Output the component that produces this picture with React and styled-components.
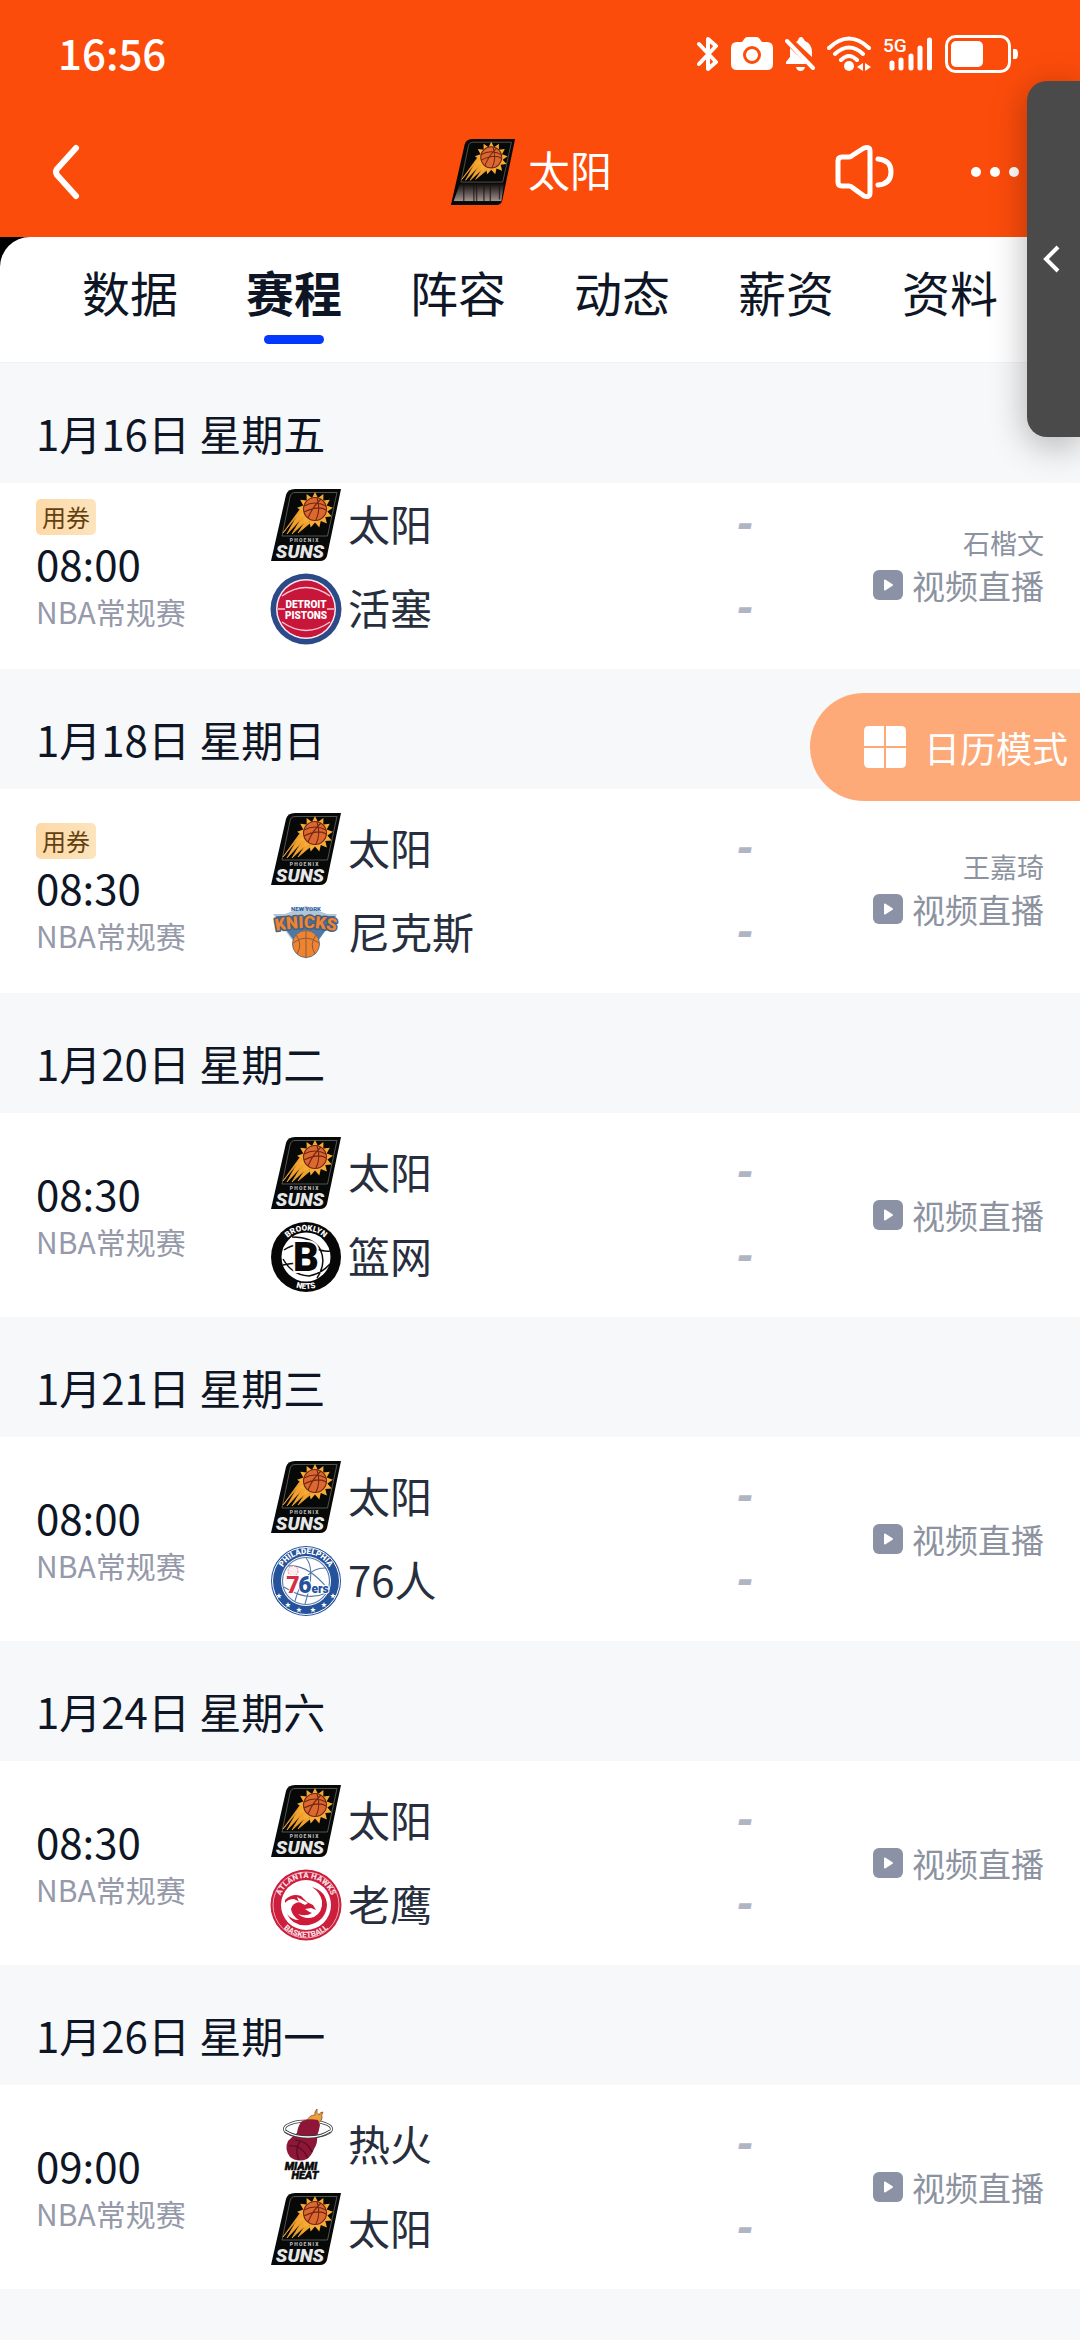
import React from "react";
import styled, { createGlobalStyle } from "styled-components";

const schedule = [
  {
    date: "1月16日 星期五",
    time: "08:00",
    coupon: true,
    host: "石楷文",
    teams: ["suns", "pistons"],
    scrolled: true,
  },
  {
    date: "1月18日 星期日",
    time: "08:30",
    coupon: true,
    host: "王嘉琦",
    teams: ["suns", "knicks"],
  },
  { date: "1月20日 星期二", time: "08:30", teams: ["suns", "nets"] },
  { date: "1月21日 星期三", time: "08:00", teams: ["suns", "sixers"] },
  { date: "1月24日 星期六", time: "08:30", teams: ["suns", "hawks"] },
  { date: "1月26日 星期一", time: "09:00", teams: ["heat", "suns"] },
];

const tabs = ["数据", "赛程", "阵容", "动态", "薪资", "资料"];

// LOGOS
const burst = (cx, cy, outer, inner, count) => {
  const pts = [];
  for (let i = 0; i < count * 2; i++) {
    const r = i % 2 ? inner : outer;
    const a = (Math.PI * i) / count - Math.PI / 2;
    pts.push(
      `${(cx + r * Math.cos(a)).toFixed(1)},${(cy + r * Math.sin(a)).toFixed(1)}`
    );
  }
  return pts.join(" ");
};

const SunsLogo = ({ blurredName }) => (
  <Logo viewBox="0 0 72 72" aria-hidden="true">
    <defs>
      <linearGradient id="smear" x1="0" y1="0" x2="0" y2="1">
        <stop offset="0" stopColor="#0b0707" />
        <stop offset="1" stopColor="#a39592" />
      </linearGradient>
    </defs>
    <path
      d="M25 0H71L57 67Q55.500 72 50 72H1L16 6Q17.500 0 25 0Z"
      fill="#070808"
    />
    <path
      d="M25 3.500H67L57.500 47H12L20 8Q21 3.500 25 3.500Z"
      fill="none"
      stroke="#55534c"
      strokeWidth="1"
    />
    <path
      d="M31 19L13 44L27 27L17 45L31 30L22 45L35 33L28 44L40 34Z"
      fill="#f2a22e"
      stroke="#f2a22e"
      strokeWidth="0.800"
    />
    <polygon points={burst(45, 21, 18, 12.5, 13)} fill="#f6ab36" />
    <circle cx="45" cy="20" r="11.500" fill="#dc6830" />
    <g fill="none" stroke="#6d2613" strokeWidth="1.100">
      <circle cx="45" cy="20" r="11.500" />
      <path d="M34 17Q45 11 56 17M34 23Q49 16 56 21M38 29Q43 17 51 10M46 31Q51 21 47 9" />
    </g>
    {blurredName ? (
      <>
        <path d="M11 48H59L56 68H4Z" fill="url(#smear)" />
        <path
          d="M15 50V68M26 50V68M29 50V68M37 50V68M44 50V68M54 50V66"
          stroke="#1c1212"
          strokeWidth="1.500"
          opacity="0.700"
        />
        <path d="M3 68H56L54 71L50 72H1Z" fill="#070808" />
      </>
    ) : (
      <>
        <LogoText x="34" y="53" $size={5} fill="#b9babd">
          P H O E N I X
        </LogoText>
        <LogoText
          x="30"
          y="69"
          $size={19}
          fill="#e6e7e9"
          fontStyle="italic"
        >
          SUNS
        </LogoText>
      </>
    )}
  </Logo>
);

const PistonsLogo = () => (
  <Logo viewBox="0 0 72 72" aria-hidden="true">
    <circle cx="36" cy="36" r="35.500" fill="#2b4a87" />
    <circle cx="36" cy="36" r="30" fill="#f7e9ef" />
    <circle cx="36" cy="36" r="28.500" fill="#c8153a" />
    <g fill="none" stroke="#f5c9d5" strokeWidth="1.400">
      <path d="M8 36H64" />
      <path d="M12 23Q36 6 60 23M12 49Q36 66 60 49" />
    </g>
    <rect x="15" y="26" width="42" height="21" fill="#c8153a" />
    <LogoText x="36" y="35" $size={10} fill="#fff">
      DETROIT
    </LogoText>
    <LogoText x="36" y="46" $size={10} fill="#fff">
      PISTONS
    </LogoText>
  </Logo>
);

const KnicksLogo = () => (
  <Logo viewBox="0 0 72 72" aria-hidden="true">
    <defs>
      <path id="knicksArc" d="M2 35Q36 27 70 35" />
    </defs>
    <path d="M3 17H15L36 9L57 17H67L36 62Z" fill="#b4c6d4" />
    <path d="M6 19H66L36 60Z" fill="#4d79a6" />
    <LogoText x="36" y="14" $size={6} fill="#2e67a5">
      NEW YORK
    </LogoText>
    <circle
      cx="36"
      cy="47"
      r="13.500"
      fill="#ef8430"
      stroke="#6d6f79"
      strokeWidth="1"
    />
    <path
      d="M36 34V61M26 38Q33 47 27 57M46 38Q39 47 45 57M23 46Q36 36 49 46"
      fill="none"
      stroke="#8b5a42"
      strokeWidth="1"
    />
    <LogoText
      $size={17}
      fill="#ef8430"
      stroke="#465f80"
      strokeWidth="3"
      strokeLinejoin="round"
      paintOrder="stroke"
    >
      <textPath href="#knicksArc" startOffset="50%">
        KNICKS
      </textPath>
    </LogoText>
  </Logo>
);

const NetsLogo = () => (
  <Logo viewBox="0 0 72 72" aria-hidden="true">
    <defs>
      <path id="netsTop" d="M9.500 36A26.500 26.500 0 0 1 62.500 36" />
      <path id="netsBottom" d="M4 36A32 32 0 0 0 68 36" />
    </defs>
    <circle cx="36" cy="36" r="35" fill="#070707" />
    <circle cx="36" cy="36" r="24.500" fill="#fff" />
    <g fill="none" stroke="#0c0c0c" strokeWidth="1.500">
      <path d="M14 29Q26 20 44 27Q54 31 60 30M13 44Q30 40 36 45M22 16Q43 16 50 28Q57 42 47 57M13 38Q22 54 39 55Q51 53 60 43" />
    </g>
    <LogoText
      x="36"
      y="50"
      $size={40}
      $narrow
      fill="#090909"
      stroke="#fff"
      strokeWidth="4"
      paintOrder="stroke"
    >
      B
    </LogoText>
    <LogoText $size={8} fill="#fff">
      <textPath href="#netsTop" startOffset="50%">
        BROOKLYN
      </textPath>
    </LogoText>
    <LogoText $size={8} fill="#fff">
      <textPath href="#netsBottom" startOffset="50%">
        NETS
      </textPath>
    </LogoText>
  </Logo>
);

const SixersLogo = () => (
  <Logo viewBox="0 0 72 72" aria-hidden="true">
    <defs>
      <path id="sixersTop" d="M12.200 47A26.500 26.500 0 1 1 59.800 47" />
    </defs>
    <circle cx="36" cy="36" r="35" fill="#24529b" />
    <circle cx="36" cy="36" r="33.500" fill="none" stroke="#fff" />
    <circle cx="36" cy="36" r="25" fill="#fff" />
    <g fill="none" stroke="#5878a8" strokeWidth="1.100">
      <circle cx="36" cy="36" r="23.500" />
      <path d="M18 21Q38 19 58 44M36 13Q46 24 35 59M56 23Q34 22 25 56M14 42Q37 57 56 48" />
    </g>
    <LogoText $size={8} fill="#fff">
      <textPath href="#sixersTop" startOffset="50%">
        PHILADELPHIA
      </textPath>
    </LogoText>
    {[
      [9, 51],
      [18, 60],
      [29, 65],
      [43, 65],
      [54, 60],
      [63, 51],
    ].map(([x, y]) => (
      <polygon key={x} points={burst(x, y, 3, 1.3, 5)} fill="#fff" />
    ))}
    <g
      fill="none"
      stroke="#e58a98"
      strokeWidth="1"
      transform="translate(23 26)"
    >
      <circle r="5" fill="#fbeff1" strokeDasharray="2 1" />
    </g>
    <LogoText
      x="23"
      y="48"
      $size={23}
      fill="#d52e46"
      stroke="#fff"
      strokeWidth="2"
      paintOrder="stroke"
    >
      7
    </LogoText>
    <LogoText
      x="35"
      y="48"
      $size={23}
      fill="#24529b"
      stroke="#fff"
      strokeWidth="2"
      paintOrder="stroke"
    >
      6
    </LogoText>
    <LogoText
      x="50"
      y="48"
      $size={12}
      fill="#24529b"
      stroke="#fff"
      strokeWidth="2"
      paintOrder="stroke"
    >
      ers
    </LogoText>
  </Logo>
);

const HawksLogo = () => (
  <Logo viewBox="0 0 72 72" aria-hidden="true">
    <defs>
      <path id="hawksTop" d="M9 36A27 27 0 0 1 63 36" />
      <path id="hawksBottom" d="M3.500 36A32.500 32.500 0 0 0 68.500 36" />
    </defs>
    <circle cx="36" cy="36" r="35.500" fill="#cb1f3d" />
    <circle cx="36" cy="36" r="33" fill="none" stroke="#eda9b5" />
    <circle cx="36" cy="36" r="25" fill="#fff" />
    <path
      d="M15 31Q22 24 31 27L37 33L43 36L46 41L41 39L35 40Q39 43 42 44Q36 48 28 45Q35 51 44 48Q53 43 52 32Q50 23 42 18Q56 22 57 36Q56 52 39 56Q23 58 17 45Q22 51 29 51Q22 47 21 40Q22 34 30 33L24 30Q18 30 15 34Z"
      fill="#d01a3a"
    />
    <path d="M27 28L38 34L35 36L29 33Z" fill="#fff" />
    <LogoText $size={8} fill="#f9dbe0">
      <textPath href="#hawksTop" startOffset="50%">
        ATLANTA HAWKS
      </textPath>
    </LogoText>
    <LogoText $size={8} fill="#f9dbe0">
      <textPath href="#hawksBottom" startOffset="50%">
        BASKETBALL
      </textPath>
    </LogoText>
  </Logo>
);

const HeatLogo = () => (
  <Logo viewBox="0 0 72 72" aria-hidden="true">
    <ellipse
      cx="38"
      cy="20"
      rx="23.500"
      ry="8"
      fill="none"
      stroke="#3b3b40"
      strokeWidth="3"
    />
    <ellipse
      cx="38"
      cy="20"
      rx="23.500"
      ry="8"
      fill="none"
      stroke="#fff"
      strokeWidth="1.500"
    />
    <path
      d="M37 12Q39 6 45 6Q44 3 47 0Q46 4 49 6Q50 3 53 3Q51 6 52 9Q52 12 48 14Z"
      fill="#e9a13c"
      stroke="#8d4a21"
      strokeWidth="0.800"
    />
    <path
      d="M31 13Q36 9 48 11L50 16Q49 22 47 27Q48 34 44 40Q42 46 37 50Q28 54 20 48Q14 40 18 32Q23 27 27 24Q28 17 31 13Z"
      fill="#8e1737"
    />
    <path
      d="M19 37Q31 35 38 49M25 31Q38 32 42 43M29 51Q24 42 30 32"
      fill="none"
      stroke="#4f0d22"
      strokeWidth="1.200"
    />
    <path
      d="M15 22Q24 28 38 28Q52 28 60 22"
      fill="none"
      stroke="#3b3b40"
      strokeWidth="3"
    />
    <path
      d="M15 22Q24 28 38 28Q52 28 60 22"
      fill="none"
      stroke="#fff"
      strokeWidth="1.500"
    />
    <LogoText
      x="31"
      y="61"
      $size={11}
      fill="#0a0a0a"
      stroke="#0a0a0a"
      strokeWidth="0.500"
      fontStyle="italic"
    >
      MIAMI
    </LogoText>
    <LogoText
      x="35"
      y="70"
      $size={11}
      fill="#0a0a0a"
      stroke="#0a0a0a"
      strokeWidth="0.500"
      fontStyle="italic"
    >
      HEAT
    </LogoText>
  </Logo>
);

const teamInfo = {
  suns: { name: "太阳", Icon: SunsLogo },
  pistons: { name: "活塞", Icon: PistonsLogo },
  knicks: { name: "尼克斯", Icon: KnicksLogo },
  nets: { name: "篮网", Icon: NetsLogo },
  sixers: { name: "76人", Icon: SixersLogo },
  hawks: { name: "老鹰", Icon: HawksLogo },
  heat: { name: "热火", Icon: HeatLogo },
};

// STATUS BAR
const StatusIcons = () => (
  <IconRow>
    <svg width="22" height="36" viewBox="0 0 22 36" aria-label="Bluetooth">
      <path
        d="M2 8L19 26L11 33V3L19 10L2 28"
        fill="none"
        stroke="#fff"
        strokeWidth="4"
        strokeLinecap="round"
        strokeLinejoin="round"
      />
    </svg>
    <svg width="42" height="36" viewBox="0 0 42 36" aria-label="Camera">
      <path
        d="M6 6H11L14 2Q15 1 17 1H25Q27 1 28 2L31 6H36Q42 6 42 12V28Q42 34 36 34H6Q0 34 0 28V12Q0 6 6 6Z"
        fill="#fff"
      />
      <circle
        cx="21"
        cy="19"
        r="7.500"
        fill="none"
        stroke="#fb4d0b"
        strokeWidth="3"
      />
    </svg>
    <svg width="30" height="36" viewBox="0 0 30 36" aria-label="Muted">
      <path
        d="M11 6Q13 5 14 2Q16 0 18 2L20 5Q27 8 27 16V21L11 6ZM5 12L22 28H1V26L5 21ZM11 31H20Q19 35 15.500 35Q12 35 11 31Z"
        fill="#fff"
      />
      <path d="M2 5L28 32" stroke="#fff" strokeWidth="4" strokeLinecap="round" />
    </svg>
    <svg width="44" height="36" viewBox="0 0 44 36" aria-label="Wi-Fi">
      <g fill="none" stroke="#fff" strokeWidth="4" strokeLinecap="round">
        <path d="M2 12Q22 -7 42 12M8 18Q22 5 36 18M14 24Q22 16 30 24" />
      </g>
      <circle cx="22" cy="30" r="5" fill="#fff" />
      <path d="M36 27V35L30 31ZM38 27V35L44 31Z" fill="#fff" />
    </svg>
    <svg width="50" height="36" viewBox="0 0 50 36" aria-label="5G">
      <text
        x="0"
        y="16"
        fill="#fff"
        fontFamily="Roboto, sans-serif"
        fontSize="19"
        fontWeight="500"
      >
        5G
      </text>
      <path
        d="M9 27V32M18 24V32M28 20V32M37 12V32M46.500 4V32"
        stroke="#fff"
        strokeWidth="5"
        strokeLinecap="round"
      />
    </svg>
    <svg width="74" height="38" viewBox="0 0 74 38" aria-label="Battery">
      <rect
        x="1.500"
        y="1.500"
        width="63"
        height="35"
        rx="9"
        fill="none"
        stroke="#fff"
        strokeWidth="3"
      />
      <rect x="6" y="6" width="32" height="26" rx="5" fill="#fff" />
      <path d="M68 14H71Q73 15 73 19Q73 23 71 24H68Z" fill="#fff" />
    </svg>
  </IconRow>
);

const TeamRow = ({ id }) => {
  const { name, Icon } = teamInfo[id];
  return (
    <Team>
      <Icon />
      <span>{name}</span>
      <Score>-</Score>
    </Team>
  );
};

const Game = ({ game }) => (
  <section>
    <DateTitle>{game.date}</DateTitle>
    <Match $scrolled={game.scrolled}>
      <Info>
        {game.coupon && <Coupon>用券</Coupon>}
        <time>{game.time}</time>
        <small>NBA常规赛</small>
      </Info>
      <Teams>
        {game.teams.map((id) => (
          <TeamRow key={id} id={id} />
        ))}
      </Teams>
      <Live>
        {game.host && <Host>{game.host}</Host>}
        <LiveLink href="#live">
          <svg width="30" height="30" viewBox="0 0 30 30" aria-hidden="true">
            <rect width="30" height="30" rx="6" fill="#8c92a6" />
            <path
              d="M12 10.500L19 15L12 19.500Z"
              fill="#fff"
              stroke="#fff"
              strokeWidth="2"
              strokeLinejoin="round"
            />
          </svg>
          视频直播
        </LiveLink>
      </Live>
    </Match>
  </section>
);

const App = () => {
  return (
    <Page>
      <GlobalStyle />
      <Top>
        <StatusBar>
          <Clock>16:56</Clock>
          <StatusIcons />
        </StatusBar>
        <TitleBar>
          <Side>
            <IconButton aria-label="返回">
              <svg width="32" height="60" viewBox="0 0 32 60">
                <path
                  d="M26 6L7 27Q5 30 7 33L26 54"
                  fill="none"
                  stroke="#fff"
                  strokeWidth="6"
                  strokeLinecap="round"
                />
              </svg>
            </IconButton>
          </Side>
          <Title>
            <SunsLogo blurredName />
            <h1>太阳</h1>
          </Title>
          <Side $end>
            <IconButton aria-label="播报">
              <svg width="60" height="56" viewBox="0 0 60 56">
                <g
                  fill="none"
                  stroke="#fff"
                  strokeWidth="5"
                  strokeLinecap="round"
                  strokeLinejoin="round"
                >
                  <path d="M8 13H15Q17 13 19 11L30 4Q36 2 36 7V49Q36 54 30 52L19 44Q17 42 15 42H8Q4 42 4 38V17Q4 13 8 13Z" />
                  <path d="M44 15Q57 16 57 28Q57 40 44 41" />
                </g>
              </svg>
            </IconButton>
            <IconButton aria-label="更多">
              <svg width="50" height="12" viewBox="0 0 50 12" fill="#fff">
                <circle cx="6" cy="6" r="5" />
                <circle cx="25" cy="6" r="5" />
                <circle cx="44" cy="6" r="5" />
              </svg>
            </IconButton>
          </Side>
        </TitleBar>
      </Top>

      <TabsBack>
        <Tabs>
          {tabs.map((tab) => (
            <Tab key={tab} $active={tab === "赛程"}>
              {tab}
            </Tab>
          ))}
        </Tabs>
      </TabsBack>

      <main>
        {schedule.map((game) => (
          <Game key={game.date} game={game} />
        ))}
      </main>

      <CalendarButton>
        <svg width="42" height="42" viewBox="0 0 42 42" fill="#fff">
          <path d="M5 0H20V20H0V5Q0 0 5 0ZM22 0H37Q42 0 42 5V20H22ZM0 22H20V42H5Q0 42 0 37ZM22 22H42V37Q42 42 37 42H22Z" />
        </svg>
        日历模式
      </CalendarButton>
      <EdgePanel aria-label="展开">
        <svg width="20" height="32" viewBox="0 0 20 32">
          <path
            d="M16 4L4 16L16 28"
            fill="none"
            stroke="#fff"
            strokeWidth="4"
          />
        </svg>
      </EdgePanel>
    </Page>
  );
};

const GlobalStyle = createGlobalStyle`
  * {
    box-sizing: border-box;
  }
  body {
    margin: 0;
    background: #f7f8fa;
    font-family: "Noto Sans CJK SC", sans-serif;
  }
  button {
    border: none;
    padding: 0;
    background: none;
    font-family: inherit;
  }
  svg {
    display: block;
    flex-shrink: 0;
  }
`;

const Page = styled.div`
  position: relative;
  min-height: 100vh;
  overflow: hidden;
  background: #f7f8fa;
  color: #0e1626;
`;

const Top = styled.header`
  background: #fc4c0b;
  color: #fff;
`;

const StatusBar = styled.div`
  display: flex;
  align-items: center;
  justify-content: space-between;
  height: 108px;
  padding: 0 61px 0 58px;
`;

const Clock = styled.time`
  padding-bottom: 6px;
  font-size: 42px;
  font-weight: 500;
`;

const IconRow = styled.div`
  display: flex;
  align-items: center;
  gap: 12px;
`;

const TitleBar = styled.div`
  display: flex;
  align-items: center;
  height: 129px;
  padding: 0 60px 2px 50px;
`;

const Side = styled.div`
  display: flex;
  flex: 1;
  align-items: center;
  justify-content: ${(props) => (props.$end ? "flex-end" : "flex-start")};
  gap: 76px;
`;

const IconButton = styled.button`
  color: #fff;
`;

const Logo = styled.svg`
  width: 72px;
  height: 72px;
  overflow: visible;
`;

const LogoText = styled.text`
  font-family: ${(props) => (props.$narrow ? '"Liberation Sans Narrow", ' : "")}Roboto, sans-serif;
  font-size: ${(props) => props.$size}px;
  font-weight: 900;
  text-anchor: middle;
`;

const Title = styled.div`
  display: flex;
  align-items: center;
  gap: 12px;
  padding-right: 8px;

  ${Logo} {
    width: 66px;
    height: 66px;
  }
  h1 {
    margin: 0;
    padding-bottom: 6px;
    font-size: 42px;
    font-weight: 400;
    line-height: 60px;
  }
`;

const TabsBack = styled.div`
  background: linear-gradient(to right, #000 50%, #fc4c0b 50%);
`;

const Tabs = styled.nav`
  display: flex;
  justify-content: center;
  gap: 68px;
  height: 126px;
  border-bottom: 1px solid #f0f1f3;
  border-radius: 30px 30px 0 0;
  background: #fff;
`;

const Tab = styled.button`
  display: flex;
  flex-direction: column;
  align-items: center;
  padding-top: 19px;
  color: #0e1626;
  font-size: 48px;
  font-weight: ${(props) => (props.$active ? 700 : 400)};
  line-height: 70px;

  &::after {
    content: "";
    width: 60px;
    height: 9px;
    margin-top: 9px;
    border-radius: 5px;
    background: ${(props) => (props.$active ? "#0339fd" : "transparent")};
  }
`;

const DateTitle = styled.h2`
  margin: 0;
  padding: 22px 36px 2px;
  font-size: 42px;
  font-weight: 400;
  line-height: 96px;
`;

const Match = styled.article`
  display: grid;
  grid-template-columns: 234px 1fr 291px;
  padding: ${(props) => (props.$scrolled ? 6 : 24)}px 36px 24px;
  background: #fff;
`;

const Info = styled.div`
  display: flex;
  flex-direction: column;
  align-items: flex-start;
  justify-content: center;
  padding-bottom: 4px;

  time {
    font-size: 42px;
    line-height: 56px;
  }
  small {
    color: #9599a9;
    font-size: 30px;
    line-height: 40px;
  }
`;

const Coupon = styled.span`
  padding: 0 6px;
  border-radius: 5px;
  background: linear-gradient(to right, #fdd9a8, #fce4bd);
  color: #64400f;
  font-size: 24px;
  line-height: 36px;
`;

const Teams = styled.div`
  display: grid;
  gap: 12px;
`;

const Team = styled.div`
  display: flex;
  align-items: center;
  gap: 6px;
  height: 72px;
  color: #272e3d;
  font-size: 42px;
  line-height: 60px;

  span {
    padding-bottom: 4px;
  }
`;

const Score = styled.b`
  margin-left: auto;
  padding-bottom: 4px;
  color: #b0b5c4;
  font-family: "Liberation Sans", sans-serif;
  font-size: 48px;
  font-style: italic;
  line-height: 60px;
`;

const Live = styled.div`
  display: flex;
  flex-direction: column;
  align-items: flex-end;
  justify-content: center;
  color: #8c92a0;
`;

const Host = styled.span`
  font-size: 27px;
  line-height: 36px;
`;

const LiveLink = styled.a`
  display: flex;
  align-items: center;
  gap: 9px;
  color: inherit;
  font-size: 33px;
  line-height: 48px;
  text-decoration: none;
`;

const CalendarButton = styled.button`
  position: absolute;
  top: 693px;
  right: 0;
  display: flex;
  align-items: center;
  gap: 18px;
  height: 108px;
  padding: 0 12px 0 54px;
  border-radius: 54px 0 0 54px;
  background: #feaa78;
  color: #fff;
  font-size: 36px;
`;

const EdgePanel = styled.button`
  position: absolute;
  top: 81px;
  right: 0;
  display: flex;
  align-items: center;
  width: 53px;
  height: 356px;
  padding-left: 15px;
  border-radius: 20px 0 0 20px;
  background: #4a4a4a;
  box-shadow: 0 8px 36px rgba(0, 0, 0, 0.3);
`;

export default App;
